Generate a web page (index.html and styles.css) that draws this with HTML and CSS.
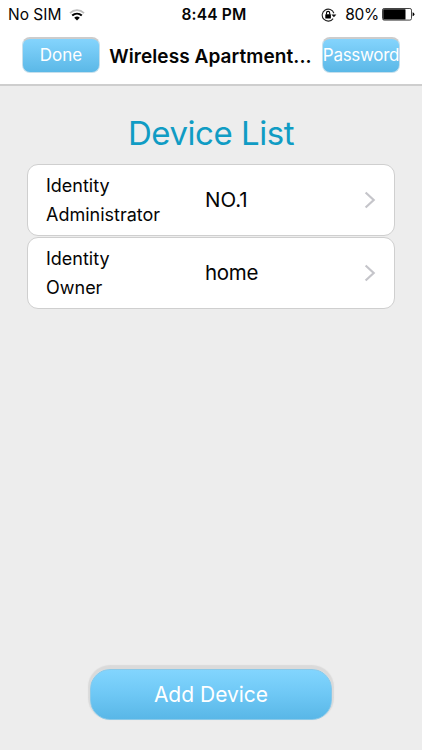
FILE: index.html
```html
<!DOCTYPE html>
<html lang="en">
<head>
<meta charset="utf-8">
<title>Device List</title>
<link rel="stylesheet" href="styles.css">
</head>
<body>
<div class="screen">
  <header class="top">
    <div class="status">
      <div class="status-left"><span class="carrier">No SIM</span>
        <svg class="wifi" width="16" height="12" viewBox="0 0 16 12" fill="none"><path d="M1 4.1C5 .2 11 .2 15 4.1" stroke="#bbb" stroke-width="1.8"/><path d="M3.2 6.6C6 4 10 4 12.8 6.6" stroke="#000" stroke-width="2"/><path d="M5.2 8.8Q8 6.4 10.8 8.8L8 11.6Z" fill="#000"/></svg>
      </div>
      <span class="time">8:44 PM</span>
      <div class="status-right">
        <svg width="17" height="14" viewBox="0 0 17 14" fill="none"><path d="M12.1 10.6A6 6 0 1 1 12.9 5.2" stroke="#222" stroke-width="1.1"/><path d="M10.4 6.4h5l-2.5 2.8z" fill="#111"/><rect x="4.3" y="6.2" width="5.6" height="4.3" rx=".5" fill="#000"/><path d="M5.5 6.5V5a1.6 1.6 0 0 1 3.2 0v1.5" stroke="#000" stroke-width="1.1"/></svg>
        <span class="percent">80%</span>
        <svg class="battery" width="33" height="13" viewBox="0 0 33 13"><rect x=".5" y=".5" width="29" height="11.6" rx="1.6" fill="#fff" stroke="#444"/><rect x="1.2" y="1.2" width="22.3" height="10.2" rx=".5"/><path d="M30.6 4.3q1.8.3 1.8 2t-1.8 2z"/></svg>
      </div>
    </div>
    <nav class="nav">
      <button class="nav-btn done"><span>Done</span></button>
      <h1 class="title">Wireless Apartment...</h1>
      <button class="nav-btn password"><span>Password</span></button>
    </nav>
  </header>
  <main class="content">
    <h2 class="heading">Device List</h2>
    <div class="row">
      <div class="role"><span class="identity">Identity</span><span class="admin">Administrator</span></div>
      <span class="name number">NO.1</span>
      <svg class="chevron" width="12" height="18" viewBox="0 0 12 18" fill="none"><path d="M1.6 1.5L9.7 9L1.6 16.5" stroke="#c5c5ca" stroke-width="2.2"/></svg>
    </div>
    <div class="row">
      <div class="role"><span class="identity">Identity</span><span class="owner">Owner</span></div>
      <span class="name home">home</span>
      <svg class="chevron" width="12" height="18" viewBox="0 0 12 18" fill="none"><path d="M1.6 1.5L9.7 9L1.6 16.5" stroke="#c5c5ca" stroke-width="2.2"/></svg>
    </div>
  </main>
  <footer class="footer"><button class="add"><span>Add Device</span></button></footer>
</div>
</body>
</html>
```
FILE: styles.css
```css
* { box-sizing: border-box; }
body { margin: 0; font-family: Inter, sans-serif; color: #050505; }
.screen { width: 422px; height: 750px; background: #ededed; display: flex; flex-direction: column; }
.top { height: 86px; background: #fff; border-bottom: 2px solid #cecece; }
.status { height: 28px; padding: 0 7px 0 8px; display: grid; grid-template-columns: 1fr auto 1fr; align-items: center; font-size: 15.5px; line-height: 28px; }
.status-left, .status-right { display: flex; align-items: center; }
.status-right { justify-content: flex-end; }
.wifi { margin-left: 8px; }
.carrier, .time, .percent { padding-top: 1px; }
.time { font-weight: 600; letter-spacing: .2px; margin-left: 5px; }
.percent { margin: 0 3px 0 7px; letter-spacing: -.3px; }
.nav { display: flex; height: 56px; padding: 9px 22px 0; }
button { border: 0; padding: 0; font-family: inherit; color: #fff; display: flex; justify-content: center; }
.nav-btn { flex: none; width: 78px; height: 36px; border-radius: 8px; background: linear-gradient(#84d4fd, #5bb8e7); border: 1px solid #c6dfec; border-top: 2px solid #ccc; font-size: 17px; line-height: 32px; white-space: nowrap; }
.password { letter-spacing: -.3px; }
.title { margin: 0 1px 0 0; flex: 1; text-align: center; white-space: nowrap; font-size: 19px; letter-spacing: .08px; font-weight: 600; line-height: 40px; }
.content { flex: 1; padding: 29px 27px 0; }
.heading { margin: 0 0 9px; height: 40px; text-align: center; font-size: 33px; line-height: 37px; letter-spacing: -.45px; font-weight: 400; color: #109cc4; }
.row { width: 368px; height: 72px; margin-bottom: 1px; padding: 0 18px 0 19px; display: flex; align-items: center; background: #fff; border: 1px solid #cfcfcf; border-radius: 11px; }
.role { width: 158px; margin-left: -1px; display: flex; flex-direction: column; font-size: 18px; line-height: 29px; }
.name { flex: 1; margin-left: 1px; font-size: 20.5px; line-height: 26px; padding-bottom: 1px; }
.home { letter-spacing: -.3px; }
.footer { height: 87px; display: flex; justify-content: center; }
.add { width: 242px; height: 51px; margin-top: 6px; border-radius: 20px; background: linear-gradient(#82d5fe 0%, #70c9f6 45%, #59b7e7 100%); border: 1px solid #8bc9e8; box-shadow: 0 -2px 1px 2px #dadada; font-size: 21px; line-height: 49px; }
```
